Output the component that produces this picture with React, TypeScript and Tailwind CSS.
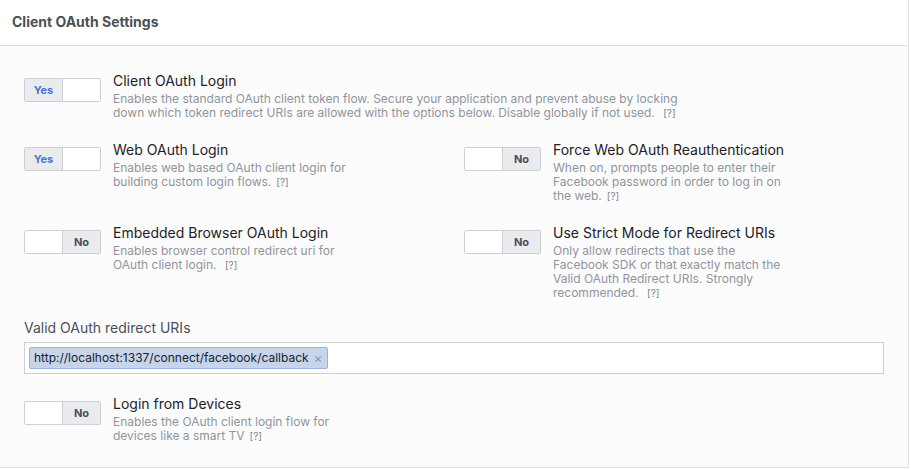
const font = { fontFamily: 'Inter, "Liberation Sans", Arial, sans-serif' };

type Setting = {
  title: string;
  lines: string[];
  on: boolean;
};

function Toggle({ on }: { on: boolean }) {
  return (
    <div className="flex h-[24px] w-[77px] shrink-0 overflow-hidden rounded-[2px] border border-[#ccd0d5] bg-white">
      {on ? (
        <>
          <div className="flex w-[38px] items-center justify-center border-r border-[#ccd0d5] bg-[#e9ebee] text-[11px] font-bold text-[#4c74d9]">
            Yes
          </div>
          <div className="flex-1 bg-white" />
        </>
      ) : (
        <>
          <div className="flex-1 bg-white" />
          <div className="flex w-[38px] items-center justify-center border-l border-[#ccd0d5] bg-[#e9ebee] text-[11px] font-bold text-[#4b4f56]">
            No
          </div>
        </>
      )}
    </div>
  );
}

function Help() {
  return <span className="ml-[5px] text-[10px] text-[#7f838b]">[?]</span>;
}

function SettingRow({ s }: { s: Setting }) {
  return (
    <div className="flex gap-[12px]">
      <div className="pt-[6px]">
        <Toggle on={s.on} />
      </div>
      <div>
        <div className="text-[14px] leading-[18px] text-[#1d2129]">{s.title}</div>
        <div className="mt-[2px] text-[12px] leading-[14px] text-[#90949c]">
          {s.lines.map((l, i) => (
            <div key={i} className="whitespace-nowrap">
              {l}
              {i === s.lines.length - 1 && <Help />}
            </div>
          ))}
        </div>
      </div>
    </div>
  );
}

const clientLogin: Setting = {
  title: "Client OAuth Login",
  on: true,
  lines: [
    "Enables the standard OAuth client token flow. Secure your application and prevent abuse by locking",
    "down which token redirect URIs are allowed with the options below. Disable globally if not used. ",
  ],
};

const grid: Setting[] = [
  {
    title: "Web OAuth Login",
    on: true,
    lines: ["Enables web based OAuth client login for", "building custom login flows."],
  },
  {
    title: "Force Web OAuth Reauthentication",
    on: false,
    lines: [
      "When on, prompts people to enter their",
      "Facebook password in order to log in on",
      "the web.",
    ],
  },
  {
    title: "Embedded Browser OAuth Login",
    on: false,
    lines: ["Enables browser control redirect uri for", "OAuth client login. "],
  },
  {
    title: "Use Strict Mode for Redirect URIs",
    on: false,
    lines: [
      "Only allow redirects that use the",
      "Facebook SDK or that exactly match the",
      "Valid OAuth Redirect URIs. Strongly",
      "recommended. ",
    ],
  },
];

const devices: Setting = {
  title: "Login from Devices",
  on: false,
  lines: ["Enables the OAuth client login flow for", "devices like a smart TV"],
};

export default function App() {
  return (
    <div style={font} className="h-[469px] w-[911px] bg-white">
      <div className="w-[909px] border-r border-b border-[#dddfe2] bg-[#fcfcfc]">
        <div className="flex h-[46px] items-center border-b border-[#dddfe2] bg-white px-[12px] pb-[2px]">
          <h2 className="text-[14px] font-bold text-[#4b4f56]">Client OAuth Settings</h2>
        </div>
        <div className="px-[24px] pt-[26px] pb-[24px]">
          <SettingRow s={clientLogin} />
          <div className="mt-[21px] grid grid-cols-[440px_1fr] gap-y-[21px]">
            {grid.map((s) => (
              <SettingRow key={s.title} s={s} />
            ))}
          </div>
          <div className="mt-[19px] text-[14px] leading-[18px] text-[#4b4f56]">Valid OAuth redirect URIs</div>
          <div className="mt-[5px] flex h-[32px] w-[860px] items-center border border-[#ccd0d5] bg-white px-[4px]">
            <div className="flex h-[22px] items-center rounded-[2px] border border-[#9cb4d8] bg-[#c6d4ec] pl-[4px] pr-[5px] text-[12px] text-[#1d2129]">
              http://localhost:1337/connect/facebook/callback
              <span className="ml-[5px] text-[13px] leading-none text-[#90949c]">×</span>
            </div>
          </div>
          <div className="mt-[21px]">
            <SettingRow s={devices} />
          </div>
        </div>
      </div>
    </div>
  );
}
